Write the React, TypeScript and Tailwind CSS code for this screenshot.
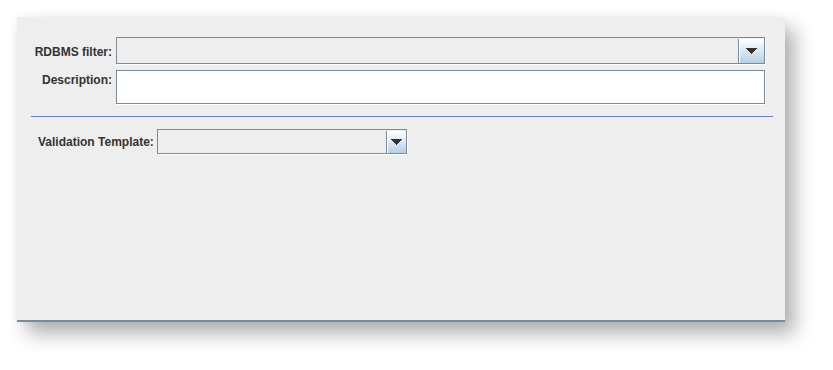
function ArrowButton({ width }: { width: string }) {
  return (
    <div
      className={`${width} h-full flex items-center justify-center border-l border-[#7a8a99] bg-gradient-to-b from-[#ffffff] to-[#b8cfe5] shadow-[inset_1px_1px_0_#ffffff]`}
    >
      <svg width="11" height="6" viewBox="0 0 11 6">
        <path d="M0 0H11V1H10V2H9V3H8V4H7V5H6V6H5V5H4V4H3V3H2V2H1V1H0Z" fill="#333333" />
      </svg>
    </div>
  )
}

function Combo({ className, button }: { className: string; button: string }) {
  return (
    <div
      className={`${className} flex justify-end border border-[#7a8a99] bg-[#eeeeee] shadow-[1px_1px_0_#ffffff]`}
    >
      <div className="h-full pt-px">
        <ArrowButton width={button} />
      </div>
    </div>
  )
}

export default function App() {
  return (
    <div className="w-[833px] h-[370px] bg-white pt-[17px] pl-[17px] font-['Liberation_Sans',Arial,sans-serif] text-[12px] font-bold text-[#333333]">
      <div className="w-[768px] h-[305px] bg-[#eeeeee] border-b-2 border-[#7a8a99] shadow-[10px_12px_18px_rgba(0,0,0,0.3),0_0_8px_rgba(0,0,0,0.06)] pt-[20px]">
        {/* RDBMS filter */}
        <div className="flex items-center pr-[20px]">
          <div className="w-[99px] text-right pr-[4px] pt-[3px]">RDBMS filter:</div>
          <Combo className="flex-1 h-[27px]" button="w-[26px]" />
        </div>

        {/* Description */}
        <div className="flex items-start pr-[20px] mt-[6px]">
          <div className="w-[99px] text-right pr-[4px] pt-[1px]">Description:</div>
          <div className="flex-1 h-[34px] bg-white border border-[#7a8a99] shadow-[1px_1px_0_#ffffff]" />
        </div>

        <div className="h-px bg-[#6382bf] ml-[14px] mr-[12px] mt-[12px]" />

        {/* Validation Template */}
        <div className="flex items-center pl-[21px] mt-[12px]">
          <div className="pr-[3px] pt-[1px]">Validation Template:</div>
          <Combo className="w-[250px] h-[25px]" button="w-[20px]" />
        </div>
      </div>
    </div>
  )
}
